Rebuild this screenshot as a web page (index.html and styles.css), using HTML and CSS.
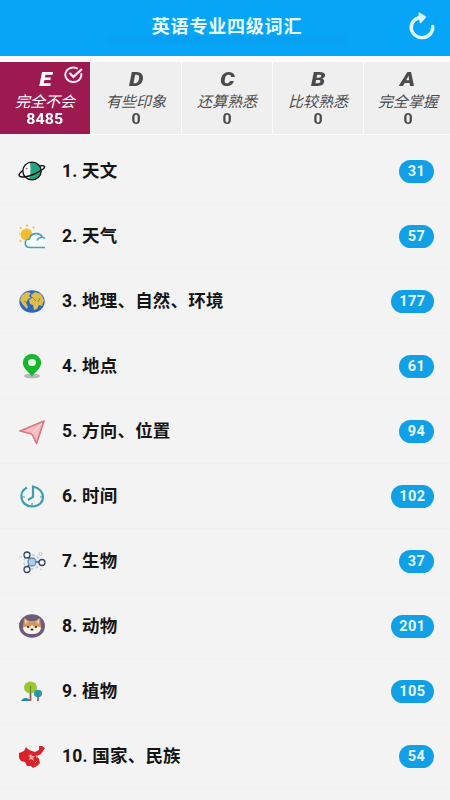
FILE: index.html
```html
<!DOCTYPE html>
<html lang="zh-CN">
<head>
<meta charset="utf-8">
<title>英语专业四级词汇</title>
<link rel="stylesheet" href="styles.css">
</head>
<body>
<header class="bar">
  <h1 class="title">英语专业四级词汇</h1>
  <svg class="refresh" viewBox="0 0 28 30" fill="none" stroke="#dffbff" stroke-width="3.4"><path d="M14 6.2A10.8 10.2 0 1 0 24.7 15.4" stroke-linecap="round"/><path d="M11.500 2.500l5.500 3.700-4.500 5z" fill="#dffbff" stroke-width="2" stroke-linejoin="round"/></svg>
</header>
<nav class="tabs">
  <div class="tab active"><b class="grade">E</b><span class="label">完全不会</span><b class="count">8485</b>
    <svg class="check" viewBox="0 0 20 18" fill="none" stroke="#f8e8f0" stroke-width="2" stroke-linecap="round"><path d="M13 2.300A8 7.300 0 1 0 17.300 8"/><path d="M6 7.500l3.400 3.400L17.300 3.600" stroke-width="2.300"/></svg>
  </div>
  <div class="tab"><b class="grade">D</b><span class="label">有些印象</span><b class="count">0</b></div>
  <div class="tab"><b class="grade">C</b><span class="label">还算熟悉</span><b class="count">0</b></div>
  <div class="tab"><b class="grade">B</b><span class="label">比较熟悉</span><b class="count">0</b></div>
  <div class="tab"><b class="grade">A</b><span class="label">完全掌握</span><b class="count">0</b></div>
</nav>
<main class="list">
  <div class="row">
    <svg class="icon" viewBox="0 0 28 28"><ellipse cx="14" cy="14" rx="9.2" ry="8.8" fill="#25a584"/><path d="M12 5.5C6 6.5 4.5 11 5 15c.5 4 3 6 6 7 2-3 1.500-13 1-16.500z" fill="#fff"/><ellipse cx="14" cy="14" rx="9.2" ry="8.8" fill="none" stroke="#111" stroke-width="1.3"/><path d="M5 13.500C2 15.500.5 17.500 1.500 19c2 2 9 .7 15-2s11-6 10-7.500c-.5-1-2.500-1-5-.5" fill="none" stroke="#111" stroke-width="1.4"/><path d="M7.500 11l2 1" stroke="#d44a62" stroke-width="1.2"/></svg>
    <span class="name">1. 天文</span><b class="badge">31</b>
  </div>
  <div class="row">
    <svg class="icon" viewBox="0 0 28 28"><g fill="#f5bd2e"><circle cx="8.500" cy="12.500" r="6"/><circle cx="9" cy="3.500" r="1.100"/><circle cx="2.500" cy="6" r="1.100"/><circle cx="15.500" cy="5.500" r="1.100"/><circle cx="1.500" cy="12" r=".8"/><circle cx="2.500" cy="19" r="1.100"/></g><path d="M27 25.500H12C5.500 25.500 6 17 11.500 17c1-6.500 11-7.500 13-1l3 1z" fill="#f5fafb"/><path d="M27 25.500H12C5.500 25.500 6 17 11.500 17c1-6.500 11-7.500 13-1M19 18.500c1-3.500 5.500-4 8-2" fill="none" stroke="#45a5b6" stroke-width="1.600"/></svg>
    <span class="name">2. 天气</span><b class="badge">57</b>
  </div>
  <div class="row">
    <svg class="icon" viewBox="0 0 28 28"><ellipse cx="14" cy="14.500" rx="12.700" ry="11.300" fill="#2967c5"/><path d="M4 8l5-3 4 1-2 3 2 2-3 1-2 4 2 4-1 2-4-4-3-5zM13 8l4-3 6 2 3 6-2 6-3-1-2 4-3 1-1-5-3-1-1-4 3-2z" fill="#dfbd4d"/><path d="M14 10l3 3 1 1M20 15l2-4M6 14l3 2" fill="none" stroke="#7b7940" stroke-width=".8"/></svg>
    <span class="name">3. 地理、自然、环境</span><b class="badge">177</b>
  </div>
  <div class="row">
    <svg class="icon" viewBox="0 0 28 28"><ellipse cx="14" cy="24" rx="8" ry="2.300" fill="#b5b7b8"/><path d="M14 24.500C11 20 4.800 16.500 4.800 10.500a9.200 8.500 0 0 1 18.400 0C23.200 16.500 17 20 14 24.500z" fill="#16b82b"/><ellipse cx="14" cy="10.500" rx="4" ry="3.600" fill="#effced"/></svg>
    <span class="name">4. 地点</span><b class="badge">61</b>
  </div>
  <div class="row">
    <svg class="icon" viewBox="0 0 28 28"><path d="M2 14L26 4 18.500 26.500 14 17z" fill="#f6bcc0" stroke="#d97880" stroke-width="1.700" stroke-linejoin="round"/><path d="M14 17L24 6" stroke="#fbe6e7" stroke-width="1"/></svg>
    <span class="name">5. 方向、位置</span><b class="badge">94</b>
  </div>
  <div class="row">
    <svg class="icon" viewBox="0 0 28 28" fill="none" stroke="#3c9eb2" stroke-width="2.200"><path d="M9 5.500C0 10 2 24 14 24.500c14 0 15-17 1-20v10.500l-5 3"/><path d="M4 15h3m15 0h3M14 21v3" stroke-width="1.200"/></svg>
    <span class="name">6. 时间</span><b class="badge">102</b>
  </div>
  <div class="row">
    <svg class="icon" viewBox="0 0 28 28"><g fill="none" stroke="#bdcbd9"><ellipse cx="14" cy="15" rx="8" ry="7" stroke-dasharray="3 2" stroke-width="1.500"/><circle cx="22.500" cy="7" r="1.500"/><path d="M1 10h3M22 22l2 1"/></g><g fill="#f2f4f7" stroke="#35475e" stroke-width="1.300"><path d="M10 10l3 3m-2 5l-2 2M17 15h5"/><circle cx="14" cy="15" r="4" fill="#a5cff0" stroke="#6486aa"/><circle cx="9" cy="8" r="3"/><circle cx="9" cy="22.500" r="3"/><circle cx="24" cy="15.500" r="3"/></g></svg>
    <span class="name">7. 生物</span><b class="badge">37</b>
  </div>
  <div class="row">
    <svg class="icon" viewBox="0 0 28 28"><ellipse cx="14" cy="14" rx="13" ry="11.800" fill="#6b5b7c"/><path d="M6 6l5 3h6l5-3 1 9c0 5-4 7-9 7s-9-2-9-7z" fill="#cf9a5c"/><path d="M7 7l3 3-3 2zm14 0l-3 3 3 2z" fill="#f5cbb5"/><path d="M5 16c3-2 5-1 6 0l3-3 3 3c1-1 3-2 6 0-1 5-5 6-9 6s-8-1-9-6z" fill="#fff4e8"/><g fill="#282026"><circle cx="10" cy="15" r="1"/><circle cx="18" cy="15" r="1"/><ellipse cx="14" cy="17.500" rx="1.500" ry="1"/></g></svg>
    <span class="name">8. 动物</span><b class="badge">201</b>
  </div>
  <div class="row">
    <svg class="icon" viewBox="0 0 28 28"><path d="M3 24c2-4 7-4 10 0z" fill="#2688a8"/><path d="M12.500 12v12M20 17v7" stroke="#9a5260" stroke-width="1.700"/><ellipse cx="12.500" cy="10.500" rx="6.500" ry="6" fill="#9ac72e"/><ellipse cx="20" cy="16.500" rx="4" ry="3.800" fill="#279aad"/><path d="M12.500 9v9M20 15v5" stroke="#557343" stroke-width=".8"/></svg>
    <span class="name">9. 植物</span><b class="badge">105</b>
  </div>
  <div class="row">
    <svg class="icon" viewBox="0 0 28 28"><path d="M1 11l5-2 2-4 3 3 6 2 4-2 0-4 3 0 3 2-2 3-2 3-4 2 2 3 1 4-3 3-4 2-2-2-4 0-2-4-4-1-2-3z" fill="#d8232b"/><path d="M13 12l1 2 3 0-2 2 1 3-3-2-2 1 1-3-2-1 2-1z" fill="#f9aaa5"/><path d="M18 13l1 3m0 3l-2 2" stroke="#f4a19b"/></svg>
    <span class="name">10. 国家、民族</span><b class="badge">54</b>
  </div>
</main>
</body>
</html>
```
FILE: styles.css
```css
* { box-sizing: border-box; }
body {
  margin: 0;
  height: 800px;
  overflow: hidden;
  background: #f3f3f4;
  font-family: Roboto, "Noto Sans CJK SC", sans-serif;
}
.bar {
  position: relative;
  height: 56px;
  display: flex;
  justify-content: center;
  background: #07a5f8;
}
.bar::after {
  content: "";
  position: absolute;
  left: 110px;
  top: 37px;
  width: 235px;
  height: 6px;
  background: #0797e5;
  opacity: .55;
  filter: blur(2px);
}
.title {
  z-index: 1;
  margin: 0;
  padding-left: 4px;
  font-size: 18px;
  line-height: 54px;
  letter-spacing: .8px;
  color: #e9fcff;
}
.refresh {
  position: absolute;
  left: 408px;
  top: 11px;
  width: 28px;
  height: 30px;
}
.tabs {
  display: grid;
  grid-template-columns: repeat(5, 90px);
  column-gap: 1px;
  height: 79px;
  padding: 6px 0 1px;
  overflow: hidden;
  background: #fbfbfb;
}
.tab {
  position: relative;
  display: flex;
  flex-direction: column;
  align-items: center;
  padding-top: 7px;
  background: #efeff0;
  color: #4b4b4b;
}
.tab:last-child { padding-right: 2px; }
.tab.active { background: #9d1a51; color: #fff; }
.grade {
  font-size: 20px;
  line-height: 21px;
  font-style: italic;
  font-weight: 900;
  transform: scaleX(1.15);
}
.label {
  font-size: 15px;
  line-height: 22px;
  font-style: italic;
  font-family: "Noto Sans CJK SC", sans-serif;
}
.count {
  font-size: 14.500px;
  line-height: 16px;
  letter-spacing: .1px;
  transform: scaleX(1.1);
}
.check {
  position: absolute;
  right: 6px;
  top: 4px;
  width: 20px;
  height: 18px;
}
.list { padding-top: 4px; }
.row {
  height: 65px;
  display: flex;
  align-items: center;
  padding: 0 16px 0 18px;
  border-bottom: 1px solid #f0f0f1;
}
.icon { width: 28px; height: 28px; margin-right: 16px; }
.name {
  flex: 1;
  padding-bottom: 3px;
  font-size: 17.500px;
  font-weight: 700;
  letter-spacing: .2px;
  color: #151515;
}
.badge {
  min-width: 35px;
  height: 23px;
  padding: 0 8.500px;
  border-radius: 12px;
  background: #119fe6;
  color: #e6fbff;
  font-size: 14.500px;
  line-height: 23px;
  letter-spacing: .45px;
  text-align: center;
}
```
